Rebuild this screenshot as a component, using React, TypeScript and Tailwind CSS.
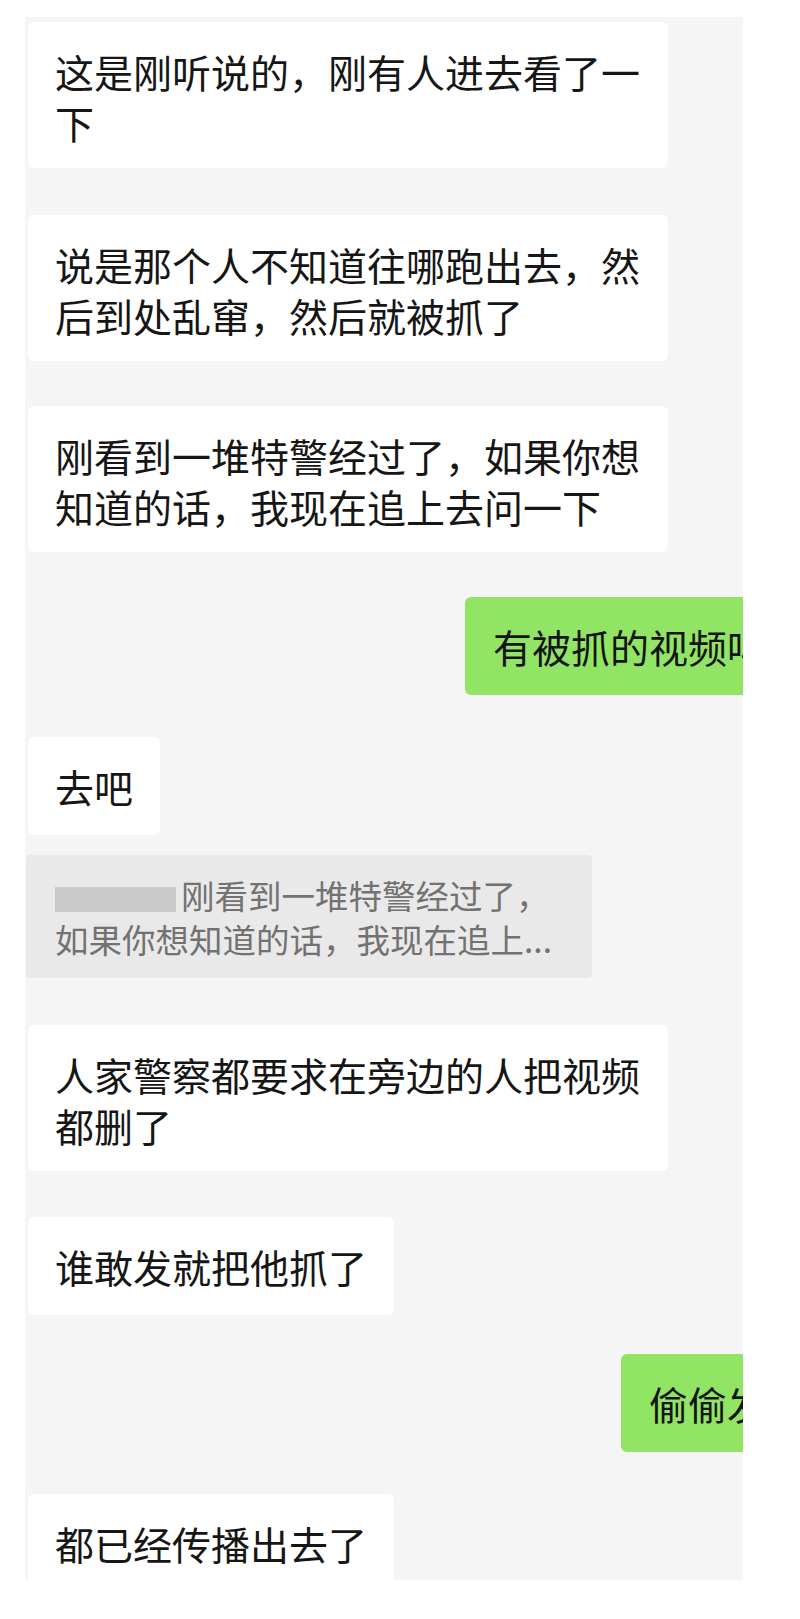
import React from 'react';

const font = { fontFamily: '"Noto Sans CJK SC", "Noto Sans", sans-serif' };

function Left({ text, single, className = '' }: { text: string; single?: boolean; className?: string }) {
  return (
    <div
      className={`w-fit max-w-[640px] rounded-md bg-white pl-[27px] pr-[27px] text-[39px] leading-[51px] text-[#161616] ${
        single ? 'pt-[24px] pb-[23px]' : 'pt-[24px] pb-[20px]'
      } ${className}`}
    >
      {text}
    </div>
  );
}

function Right({ text, className = '' }: { text: string; className?: string }) {
  return (
    <div className={`flex w-full justify-end ${className}`}>
      <div className="-mr-[50px] shrink-0 whitespace-nowrap rounded-md bg-[#92e465] pl-[28px] pr-[27px] py-[23px] text-[39px] leading-[52px] text-[#141414]">
        {text}
      </div>
    </div>
  );
}

export default function App() {
  return (
    <div className="min-h-[1619px] w-[800px] bg-white pl-[25px] pt-[17px]" style={font}>
      <div className="flex h-[1563px] w-[718px] flex-col items-start overflow-hidden bg-[#f5f5f5] pl-[3px] pt-[5px]">
        <Left text="这是刚听说的，刚有人进去看了一下" />
        <Left className="mt-[47px]" text="说是那个人不知道往哪跑出去，然后到处乱窜，然后就被抓了" />
        <Left className="mt-[45px]" text="刚看到一堆特警经过了，如果你想知道的话，我现在追上去问一下" />
        <Right className="mt-[45px]" text="有被抓的视频吗" />
        <Left className="mt-[42px]" single text="去吧" />

        <div className="-ml-[2px] mt-[20px] w-[566px] rounded-[4px] bg-[#e9e9e9] pl-[29px] pt-[18px] pb-[17px] text-[33.5px] leading-[44px] text-[#727272]">
          <span className="mr-[5px] inline-block h-[25px] w-[121px] translate-y-[3px] bg-[#c9c9c9]" />
          <span>刚看到一堆特警经过了，</span>
          <br />
          <span>如果你想知道的话，我现在追上...</span>
        </div>

        <Left className="mt-[47px]" text="人家警察都要求在旁边的人把视频都删了" />
        <Left className="mt-[46px]" single text="谁敢发就把他抓了" />
        <Right className="mt-[39px]" text="偷偷发" />
        <Left className="mt-[42px]" single text="都已经传播出去了" />
      </div>
    </div>
  );
}
